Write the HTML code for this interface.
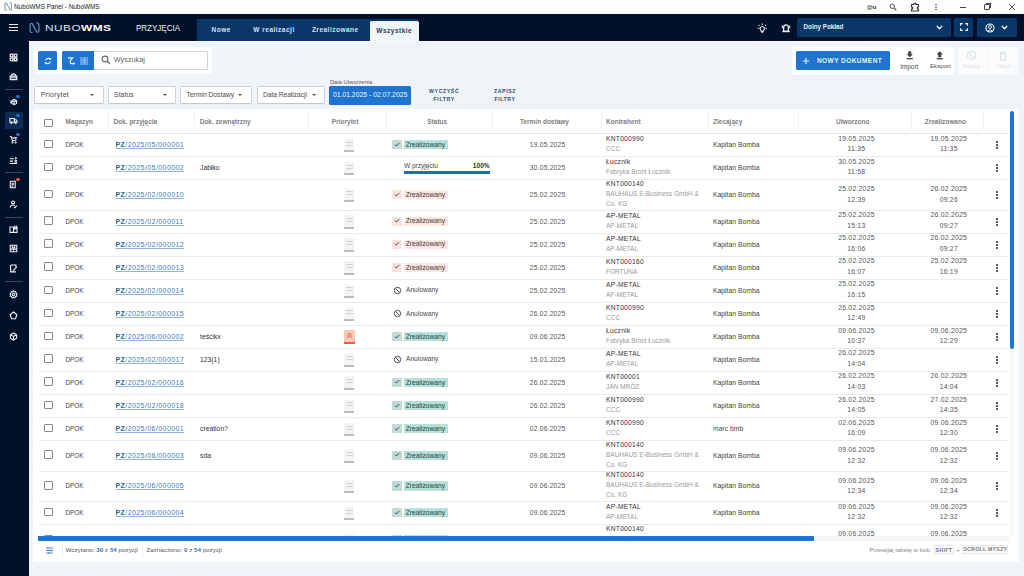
<!DOCTYPE html><html><head><meta charset='utf-8'><style>
*{box-sizing:border-box;margin:0;padding:0}
html,body{width:1024px;height:576px;overflow:hidden;background:#eff4f9;font-family:"Liberation Sans",sans-serif;color:#444}
.a{position:absolute}
.t{position:absolute;white-space:nowrap;line-height:1}
.fc{display:flex;align-items:center}
.cb{position:absolute;width:8.6px;height:8.6px;border:1.25px solid #8a8a8a;border-radius:1px;background:#fff}
.sep{position:absolute;width:1px;background:#efefef}
.rl{position:absolute;height:1px;background:#ebebed}
.cell{position:absolute;display:flex;align-items:center;white-space:nowrap;font-size:6.8px;color:#444}
.kn{position:absolute;display:flex;flex-direction:column;justify-content:center;white-space:nowrap;font-size:6.5px;line-height:10px}
.kn .l1{color:#333;font-size:6.7px;letter-spacing:0.25px}
.kn .l2{color:#9a9a9a}
.dt{position:absolute;display:flex;flex-direction:column;justify-content:center;align-items:center;white-space:nowrap;font-size:6.8px;line-height:10.4px;color:#555;letter-spacing:0.25px}
.pz{color:#3b7cc0;text-decoration:underline;text-decoration-color:#8fb5de;text-decoration-thickness:0.6px;text-underline-offset:1px;letter-spacing:0.42px}
.pz b{color:#2a5f9c}
.hd{position:absolute;top:109.4px;height:24.5px;display:flex;align-items:center;font-size:6.5px;font-weight:700;color:#7f7f7f;white-space:nowrap}
.sb{position:absolute;left:5px;width:18px;height:1px;background:#3a4760}
</style></head><body>
<div class='a' style='left:0;top:0;width:1024px;height:14px;background:#fefefc'></div>
<svg class='a' style='left:3.5px;top:2.3px' width='8.5' height='9' viewBox='0 0 11 11.5'><path d='M3.6 10.7Q1.1 10.9 1.1 8.2V3.4Q1.1 0.6 3.2 1.6L7.8 9.9Q9.9 10.9 9.9 8.1V3.3Q9.9 0.6 7.4 0.8' fill='none' stroke='#8da3bd' stroke-width='1.5'/></svg>
<div class='t' style='left:14px;top:3.5px;font-size:6.4px;color:#222'>NuboWMS Panel - NuboWMS</div>
<div class='t' style='left:867px;top:3.5px;font-size:6px;font-weight:700;color:#333'>&#64;u</div>
<svg class='a' style='left:889px;top:3px' width='8' height='8' viewBox='0 0 8 8'><circle cx='3.3' cy='3.3' r='2.2' fill='none' stroke='#555' stroke-width='1'/><path d='M5 5L7.3 7.3' stroke='#555' stroke-width='1.2'/></svg>
<svg class='a' style='left:910px;top:2px' width='10' height='10' viewBox='0 0 10 10'><path d='M1.5 2.5H4V1.5Q5 0.5 6 1.5V2.5H8.5V5H7.5Q6.5 6 7.5 7H8.5V9H1.5V7H2.5Q3.5 6 2.5 5H1.5Z' fill='none' stroke='#333' stroke-width='1.1'/></svg>
<div class='a' style='left:935px;top:3.5px;width:1.5px;height:1.5px;background:#444;border-radius:50%;box-shadow:0 2.5px 0 #444,0 5px 0 #444'></div>
<div class='a' style='left:959.5px;top:6.5px;width:6.5px;height:1px;background:#444'></div>
<div class='a' style='left:984px;top:4px;width:5.5px;height:5.5px;border:1px solid #444;border-radius:1px'></div>
<div class='a' style='left:985.5px;top:3px;width:5.5px;height:5px;border-top:1px solid #444;border-right:1px solid #444'></div>
<svg class='a' style='left:1008px;top:3px' width='8' height='8' viewBox='0 0 8 8'><path d='M1 1L7 7M7 1L1 7' stroke='#444' stroke-width='0.9'/></svg>
<div class='a' style='left:0;top:14px;width:1024px;height:27px;background:#01112c'></div>
<div class='a' style='left:0;top:41px;width:29px;height:535px;background:#01112c'></div>
<div class='a' style='left:9px;top:23.5px;width:9.3px;height:1.2px;background:#e8ecf2'></div>
<div class='a' style='left:9px;top:26.5px;width:9.3px;height:1.2px;background:#e8ecf2'></div>
<div class='a' style='left:9px;top:29.5px;width:9.3px;height:1.2px;background:#e8ecf2'></div>
<svg class='a' style='left:28.5px;top:21.5px' width='11' height='11.5' viewBox='0 0 11 11.5'><path d='M3.6 10.7Q1.1 10.9 1.1 8.2V3.4Q1.1 0.6 3.2 1.6L7.8 9.9Q9.9 10.9 9.9 8.1V3.3Q9.9 0.6 7.4 0.8' fill='none' stroke='#5a7fab' stroke-width='1.35'/></svg>
<div class='t' style='left:45px;top:24px;font-size:8.4px;color:#dfe5ee;transform-origin:0 0;transform:scaleX(1.42);letter-spacing:0.3px'>NUBO<b style='color:#fff'>WMS</b></div>
<div class='t' style='left:135.6px;top:24px;font-size:8.7px;color:#eef1f5;transform-origin:0 0;transform:scaleX(0.92)'>PRZYJĘCIA</div>
<div class='a' style='left:197px;top:19px;width:221px;height:22px;background:#0a3668'></div>
<div class='a' style='left:370px;top:21px;width:48.5px;height:20px;background:#eff4f9;border-radius:1.5px 1.5px 0 0'></div>
<div class='t' style='left:211.6px;top:26.5px;font-size:6.5px;font-weight:700;letter-spacing:0.5px;color:#d6e2f0'>Nowe</div>
<div class='t' style='left:253.3px;top:26.5px;font-size:6.5px;font-weight:700;letter-spacing:0.5px;color:#d6e2f0'>W realizacji</div>
<div class='t' style='left:311.9px;top:26.5px;font-size:6.5px;font-weight:700;letter-spacing:0.5px;color:#d6e2f0'>Zrealizowane</div>
<div class='t' style='left:376.3px;top:28.3px;font-size:6.5px;font-weight:700;letter-spacing:0.5px;color:#2a3c57'>Wszystkie</div>
<svg class='a' style='left:757px;top:22.5px' width='10.5' height='10.5' viewBox='0 0 10.5 10.5'><path d='M5.25 0.6V2M1.6 2L2.5 2.9M8.9 2L8 2.9M0.6 5.2H1.9M8.6 5.2H9.9' stroke='#e8edf5' stroke-width='1.1'/><path d='M5.25 9.6L3.4 6.6Q2.9 5.6 3.3 4.7Q3.9 3.5 5.25 3.5Q6.6 3.5 7.2 4.7Q7.6 5.6 7.1 6.6Z' fill='none' stroke='#e8edf5' stroke-width='1.15'/></svg>
<svg class='a' style='left:780.5px;top:23px' width='10' height='10' viewBox='0 0 10 10'><path d='M2.6 8.2V4.8Q2.6 1.8 5 1.8Q7.4 1.8 7.4 4.8V8.2Z' fill='none' stroke='#eef2f7' stroke-width='1.3'/><path d='M1.2 8.6H8.8' stroke='#eef2f7' stroke-width='1.2'/><path d='M1.6 2.6Q0.8 3.6 1.4 5M8.4 2.6Q9.2 3.6 8.6 5' fill='none' stroke='#eef2f7' stroke-width='1.1'/></svg>
<div class='a' style='left:797px;top:18px;width:153.5px;height:18.7px;background:#0a3668;border-radius:1.5px'></div>
<div class='t' style='left:803.5px;top:24px;font-size:6.3px;font-weight:700;color:#e6ecf4'>Dolny Pokład</div>
<svg class='a' style='left:935.5px;top:25px' width='7' height='5' viewBox='0 0 7 5'><path d='M0.8 0.9L3.5 3.7L6.2 0.9' fill='none' stroke='#fff' stroke-width='1.3'/></svg>
<div class='a' style='left:954.3px;top:18.2px;width:19.2px;height:18.5px;background:#0a3668;border-radius:1.5px'></div>
<svg class='a' style='left:960px;top:23.3px' width='8' height='8' viewBox='0 0 9 9'><path d='M0.7 3V0.7H3M6 0.7H8.3V3M8.3 6V8.3H6M3 8.3H0.7V6' fill='none' stroke='#fff' stroke-width='1.2'/></svg>
<div class='a' style='left:977.3px;top:18.2px;width:40.2px;height:18.5px;background:#0a3668;border-radius:1.5px'></div>
<svg class='a' style='left:985px;top:22.5px' width='10' height='10' viewBox='0 0 10 10'><circle cx='5' cy='5' r='4' fill='none' stroke='#fff' stroke-width='1.1'/><circle cx='5' cy='4' r='1.5' fill='none' stroke='#fff' stroke-width='0.9'/><path d='M2.6 8Q5 5.8 7.4 8' fill='none' stroke='#fff' stroke-width='0.9'/></svg>
<svg class='a' style='left:1001.3px;top:25px' width='7' height='5' viewBox='0 0 7 5'><path d='M0.8 0.9L3.5 3.7L6.2 0.9' fill='none' stroke='#fff' stroke-width='1.3'/></svg>
<div class='a' style='left:29px;top:41px;width:995px;height:1px;background:#fbfcfe'></div>
<svg class='a' style='left:9px;top:52.5px' width='9' height='9' viewBox='0 0 11 11'><rect x='1.5' y='1.5' width='3.2' height='3.2' stroke='#eef2f7' fill='none' stroke-width='1.43'/><rect x='6.3' y='1.5' width='3.2' height='3.2' stroke='#eef2f7' fill='none' stroke-width='1.43'/><rect x='1.5' y='6.3' width='3.2' height='3.2' stroke='#eef2f7' fill='none' stroke-width='1.43'/><rect x='6.3' y='6.3' width='3.2' height='3.2' stroke='#eef2f7' fill='none' stroke-width='1.82'/></svg>
<svg class='a' style='left:9px;top:72.0px' width='9' height='9' viewBox='0 0 11 11'><path d='M1.5 5H9.5V9.3H1.5Z M3 5V3.5Q5.5 1.2 8 3.5V5 M1.5 7H9.5' stroke='#eef2f7' fill='none' stroke-width='1.43'/></svg>
<div class='sb' style='top:89px'></div>
<svg class='a' style='left:9px;top:97.0px' width='9' height='9' viewBox='0 0 11 11'><path d='M3.5 4.5L6.3 3L9.3 4.5V8L6.3 9.5L3.5 8Z M3.5 4.5L6.3 6L9.3 4.5 M6.3 6V9.5 M0.8 5H2.6M1.2 7H2.8' stroke='#eef2f7' fill='none' stroke-width='1.30'/></svg>
<div class='a' style='left:16.4px;top:94.7px;width:3.6px;height:3.6px;border-radius:50%;background:#2c6cbf'></div>
<div class='a' style='left:5px;top:112.0px;width:17.5px;height:17px;background:#0c2b55;border-radius:1.5px'></div>
<svg class='a' style='left:9px;top:116.0px' width='9' height='9' viewBox='0 0 11 11'><path d='M1.2 3H6.6V7.6H1.2Z M6.6 4.6H8.6L9.8 6V7.6H6.6' stroke='#eef2f7' fill='none' stroke-width='1.37'/><circle cx='3' cy='8.4' r='1' stroke='#eef2f7' fill='none' stroke-width='1.17'/><circle cx='8' cy='8.4' r='1' stroke='#eef2f7' fill='none' stroke-width='1.17'/></svg>
<div class='a' style='left:16.4px;top:113.7px;width:3.6px;height:3.6px;border-radius:50%;background:#2c6cbf'></div>
<svg class='a' style='left:9px;top:135.0px' width='9' height='9' viewBox='0 0 11 11'><path d='M1 1.5L2.6 1.8L4.6 8.3 M3.2 3.6L8.8 3.2L8.3 6.5L4.1 6.8' stroke='#eef2f7' fill='none' stroke-width='1.30'/><circle cx='4.2' cy='9.2' r='0.9' stroke='#eef2f7' fill='none' stroke-width='1.17'/><circle cx='8' cy='9.2' r='0.9' stroke='#eef2f7' fill='none' stroke-width='1.17'/></svg>
<div class='a' style='left:16.4px;top:132.7px;width:3.6px;height:3.6px;border-radius:50%;background:#2c6cbf'></div>
<svg class='a' style='left:9px;top:155.5px' width='9' height='9' viewBox='0 0 11 11'><path d='M1 3.3H6M1 6.3H4.8M1 9.2H9.8M6.8 5L9.8 8M9.8 5L6.8 8M7.8 1.5L9 2.7L7.5 4' stroke='#eef2f7' fill='none' stroke-width='1.30'/></svg>
<div class='sb' style='top:172px'></div>
<svg class='a' style='left:9px;top:180.0px' width='9' height='9' viewBox='0 0 11 11'><path d='M1.6 1.6H7.6V9.4H1.6Z M3 4H6.2M3 5.8H6.2M3 7.6H5' stroke='#eef2f7' fill='none' stroke-width='1.30'/></svg>
<div class='a' style='left:16.4px;top:177.7px;width:3.6px;height:3.6px;border-radius:50%;background:#de5a42'></div>
<svg class='a' style='left:9px;top:199.5px' width='9' height='9' viewBox='0 0 11 11'><path d='M3.2 3Q3.2 1.2 5 1.2Q6.8 1.2 6.8 3Q6.8 4.6 5 4.6Q3.2 4.6 3.2 3Z M1.5 9.2Q1.5 6 5 6Q6.5 6 7.5 6.6 M6 8.3L7.3 9.4L9.6 7' stroke='#eef2f7' fill='none' stroke-width='1.30'/></svg>
<div class='sb' style='top:216.5px'></div>
<svg class='a' style='left:9px;top:225.0px' width='9' height='9' viewBox='0 0 11 11'><path d='M1.2 2.5H4.8L5.5 3.5L6.2 2.5H9.8V9H1.2Z M5.5 3.5V9 M6.8 1V5L8 4.2L9.2 5V1' stroke='#eef2f7' fill='none' stroke-width='1.30'/></svg>
<svg class='a' style='left:9px;top:244.0px' width='9' height='9' viewBox='0 0 11 11'><path d='M1.5 1.5H9.5V9.5H1.5Z M1.5 6.3H9.5M5.5 6.3V9.5M4 1.5V4.5H7V1.5' stroke='#eef2f7' fill='none' stroke-width='1.30'/></svg>
<svg class='a' style='left:9px;top:263.5px' width='9' height='9' viewBox='0 0 11 11'><path d='M2 1.3H8.5V5 M8.5 9.6H2V1.3 M4.8 8.3L9.6 3.5' stroke='#eef2f7' fill='none' stroke-width='1.37'/></svg>
<div class='sb' style='top:280.5px'></div>
<svg class='a' style='left:9px;top:290.0px' width='9' height='9' viewBox='0 0 11 11'><circle cx='5.5' cy='5.5' r='1.5' stroke='#eef2f7' fill='none' stroke-width='1.30'/><path d='M5.5 1L6.6 2.2L8.2 2L8.4 3.6L9.8 4.6L9 6L9.6 7.6L8 8L7.2 9.6L5.5 9L3.8 9.6L3 8L1.4 7.6L2 6L1.2 4.6L2.6 3.6L2.8 2L4.4 2.2Z' stroke='#eef2f7' fill='none' stroke-width='1.23'/></svg>
<svg class='a' style='left:9px;top:310.5px' width='9' height='9' viewBox='0 0 11 11'><path d='M5.5 1.3L9.6 4.5L8 9.5H3L1.4 4.5Z' stroke='#eef2f7' fill='none' stroke-width='1.43'/></svg>
<svg class='a' style='left:9px;top:331.5px' width='9' height='9' viewBox='0 0 11 11'><path d='M5.5 1.2L9.3 3.3V7.7L5.5 9.8L1.7 7.7V3.3Z M1.7 3.3L5.5 5.5L9.3 3.3 M5.5 5.5V9.8' stroke='#eef2f7' fill='none' stroke-width='1.30'/></svg>
<div class='a' style='left:33.5px;top:47px;width:178px;height:27px;background:#fdfeff;border-radius:2px'></div>
<div class='a' style='left:38.3px;top:51px;width:19.2px;height:19px;background:#1f73d1;border-radius:1.5px'></div>
<svg class='a' style='left:44px;top:56.5px' width='8' height='8' viewBox='0 0 8 8'><path d='M6.6 2.6A3 3 0 0 0 1.4 3.2M1.4 5.4A3 3 0 0 0 6.6 4.8' fill='none' stroke='#e6f1fc' stroke-width='1.15'/><path d='M5.2 0.6L7.4 1.2L6.6 3.4Z M2.8 7.4L0.6 6.8L1.4 4.6Z' fill='#e6f1fc'/></svg>
<div class='a' style='left:61.5px;top:51px;width:32.5px;height:19px;background:#1f73d1;border-radius:1.5px 0 0 1.5px'></div>
<svg class='a' style='left:67px;top:56.5px' width='9' height='8' viewBox='0 0 9 8'><path d='M0.8 0.8H5.6L3.4 3.4V6.2 M3.4 6.2Q4.5 7 7.2 6.6' fill='none' stroke='#eef6fe' stroke-width='1.2'/><path d='M6.4 5.3L7.8 6.6L6.3 7.6' fill='none' stroke='#eef6fe' stroke-width='0.9'/></svg>
<div class='a' style='left:79.8px;top:56.9px;width:8.4px;height:7.8px;background:#62a2ea;border-radius:0.5px'></div>
<div class='a' style='left:83.6px;top:58.6px;width:0.8px;height:4.4px;background:#a9cdf3'></div>
<div class='a' style='left:94px;top:51px;width:114px;height:19px;background:#fff;border:1px solid #d2d6db;border-left:none;border-radius:0 1.5px 1.5px 0'></div>
<svg class='a' style='left:100.8px;top:55.1px' width='10' height='10' viewBox='0 0 10 10'><circle cx='4' cy='4' r='2.9' fill='none' stroke='#666' stroke-width='1.1'/><path d='M6.2 6.2L9 9' stroke='#666' stroke-width='1.3'/></svg>
<div class='t' style='left:113.8px;top:55.9px;font-size:7.3px;color:#5f5f5f'>Wyszukaj</div>
<div class='a' style='left:791.5px;top:47px;width:162.5px;height:27.5px;background:#feffff;border-radius:2px'></div>
<div class='a' style='left:957.5px;top:47px;width:60px;height:27.5px;background:#fafcfe;border-radius:2px'></div>
<div class='a' style='left:795.5px;top:51.4px;width:94.5px;height:19px;background:#1f73d1;border-radius:1.5px'></div>
<svg class='a' style='left:802px;top:57px' width='8' height='8' viewBox='0 0 8 8'><path d='M4 0.8V7.2M0.8 4H7.2' stroke='#e6f0fb' stroke-width='1.2'/></svg>
<div class='t' style='left:816.9px;top:57.5px;font-size:6.5px;font-weight:700;letter-spacing:0.45px;color:#e8f1fb'>NOWY DOKUMENT</div>
<svg class='a' style='left:906.3px;top:51px' width='7.5' height='8.5' viewBox='0 0 7.5 8.5'><path d='M2.6 0.6V3.4H1.2L3.75 6L6.3 3.4H4.9V0.6Z' fill='#444' stroke='#333' stroke-width='0.6'/><path d='M0.6 7.7H6.9' stroke='#333' stroke-width='1.2'/></svg>
<div class='t' style='left:900.2px;top:63.6px;font-size:6.4px;color:#505050'>Import</div>
<svg class='a' style='left:936.3px;top:51px' width='7.5' height='8.5' viewBox='0 0 7.5 8.5'><path d='M2.6 6V3.2H1.2L3.75 0.6L6.3 3.2H4.9V6Z' fill='#444' stroke='#333' stroke-width='0.6'/><path d='M0.6 7.7H6.9' stroke='#333' stroke-width='1.2'/></svg>
<div class='t' style='left:930px;top:63.3px;font-size:6.15px;color:#505050'>Eksport</div>
<svg class='a' style='left:965.5px;top:50px' width='11' height='11' viewBox='0 0 11 11'><circle cx='5.5' cy='5.5' r='4.2' fill='none' stroke='#dcdfe3' stroke-width='1.1'/><path d='M2.6 2.6L8.4 8.4' stroke='#dcdfe3' stroke-width='1.1'/></svg>
<div class='t' style='left:962.6px;top:63.3px;font-size:6.1px;color:#dcdfe2'>Anuluj</div>
<div class='a' style='left:987.3px;top:51px;width:0.8px;height:19px;background:#f0f2f4'></div>
<svg class='a' style='left:999.3px;top:50.5px' width='8' height='10' viewBox='0 0 8 10'><path d='M1.5 1.2H6.5V9.2H1.5Z M1.5 3H6.5' fill='none' stroke='#dcdfe3' stroke-width='1'/></svg>
<div class='t' style='left:996.7px;top:63.3px;font-size:6.1px;color:#dcdfe2'>Usuń</div>
<div class='a' style='left:34.4px;top:86.2px;width:69.2px;height:18.2px;background:#fff;border:1px solid #cfd3d8;border-bottom-color:#c4c8cd;border-radius:1.5px'></div>
<div class='t' style='left:40.699999999999996px;top:90.8px;font-size:7.0px;letter-spacing:0.25px;color:#4a4a4a'>Priorytet</div>
<div class='a' style='left:90.0px;top:94px;width:0;height:0;border-left:2.1px solid transparent;border-right:2.1px solid transparent;border-top:2.1px solid #555'></div>
<div class='a' style='left:107.7px;top:86.2px;width:68.7px;height:18.2px;background:#fff;border:1px solid #cfd3d8;border-bottom-color:#c4c8cd;border-radius:1.5px'></div>
<div class='t' style='left:114.0px;top:91.5px;font-size:6.8px;letter-spacing:0.1px;color:#4a4a4a'>Status</div>
<div class='a' style='left:162.8px;top:94px;width:0;height:0;border-left:2.1px solid transparent;border-right:2.1px solid transparent;border-top:2.1px solid #555'></div>
<div class='a' style='left:180.3px;top:86.2px;width:71.7px;height:18.2px;background:#fff;border:1px solid #cfd3d8;border-bottom-color:#c4c8cd;border-radius:1.5px'></div>
<div class='t' style='left:186.60000000000002px;top:91.5px;font-size:6.7px;letter-spacing:0px;color:#4a4a4a'>Termin Dostawy</div>
<div class='a' style='left:238.4px;top:94px;width:0;height:0;border-left:2.1px solid transparent;border-right:2.1px solid transparent;border-top:2.1px solid #555'></div>
<div class='a' style='left:256.7px;top:86.2px;width:68.6px;height:18.2px;background:#fff;border:1px solid #cfd3d8;border-bottom-color:#c4c8cd;border-radius:1.5px'></div>
<div class='t' style='left:263.0px;top:91.5px;font-size:6.6px;letter-spacing:0px;color:#4a4a4a'>Data Realizacji</div>
<div class='a' style='left:311.69999999999993px;top:94px;width:0;height:0;border-left:2.1px solid transparent;border-right:2.1px solid transparent;border-top:2.1px solid #555'></div>
<div class='t' style='left:330px;top:80.3px;font-size:5.7px;color:#555'>Data Utworzenia</div>
<div class='a' style='left:329px;top:86.3px;width:82.1px;height:18.4px;background:#1f73d1;border-radius:1.5px'></div>
<div class='t' style='left:332.9px;top:92px;font-size:6.83px;color:#eef5fd'>01.01.2025 - 02.07.2025</div>
<div class='t' style='left:428.7px;top:88px;font-size:5.2px;font-weight:700;letter-spacing:0.6px;color:#2a4a72;text-align:center;width:31px;line-height:7.7px;white-space:normal'>WYCZYŚĆ FILTRY</div>
<div class='t' style='left:490px;top:88px;font-size:5.2px;font-weight:700;letter-spacing:0.6px;color:#2a4a72;text-align:center;width:30px;line-height:7.7px;white-space:normal'>ZAPISZ FILTRY</div>
<div class='a' style='left:33px;top:108.5px;width:985.5px;height:453px;background:#fff;border-radius:2px'></div>
<div class='sep' style='left:107.6px;top:112px;height:18px'></div>
<div class='sep' style='left:193.7px;top:112px;height:18px'></div>
<div class='sep' style='left:308.2px;top:112px;height:18px'></div>
<div class='sep' style='left:386.3px;top:112px;height:18px'></div>
<div class='sep' style='left:492.2px;top:112px;height:18px'></div>
<div class='sep' style='left:600.7px;top:112px;height:18px'></div>
<div class='sep' style='left:707.8px;top:112px;height:18px'></div>
<div class='sep' style='left:798.3px;top:112px;height:18px'></div>
<div class='sep' style='left:911.2px;top:112px;height:18px'></div>
<div class='sep' style='left:983.4px;top:112px;height:18px'></div>
<div class='rl' style='left:38.5px;top:133px;width:969.5px;background:#e3e5e8'></div>
<div class='cb' style='left:44px;top:118.7px'></div>
<div class='hd' style='left:65.5px'>Magazyn</div>
<div class='hd' style='left:113.5px'>Dok. przyjęcia</div>
<div class='hd' style='left:199.7px'>Dok. zewnętrzny</div>
<div class='hd' style='left:308.2px;width:78.10000000000002px;justify-content:center;padding-right:4px'>Priorytet</div>
<div class='hd' style='left:386.3px;width:105.89999999999998px;justify-content:center;padding-right:4px'>Status</div>
<div class='hd' style='left:492.2px;width:108.50000000000006px;justify-content:center;padding-right:4px'>Termin dostawy</div>
<div class='hd' style='left:606px'>Kontrahent</div>
<div class='hd' style='left:713px'>Zlecający</div>
<div class='hd' style='left:798.3px;width:112.90000000000009px;justify-content:center;padding-right:4px'>Utworzono</div>
<div class='hd' style='left:911.2px;width:72.19999999999993px;justify-content:center;padding-right:4px'>Zrealizowano</div>
<div class='a' style='left:33px;top:134px;width:987px;height:402px;overflow:hidden'>
<div class='rl' style='left:5.5px;top:22px;width:969.5px'></div>
<div class='cb' style='left:11px;top:5.7px'></div>
<div class='cell' style='left:32.5px;top:-0.8px;height:22.7px;font-size:6.3px;color:#444'>DPOK</div>
<div class='cell' style='left:82.5px;top:-0.8px;height:22.7px;font-size:7px'><span class='pz'><b>PZ</b>/2025/05/000001</span></div>
<div class='a' style='left:310.8px;top:4.7px;width:10.5px;height:13.3px;background:#f4f4f4'></div>
<div class='a' style='left:312.6px;top:7.5px;width:7px;height:0.8px;background:#d3d3d3'></div>
<div class='a' style='left:312.6px;top:10.5px;width:7px;height:0.8px;background:#d3d3d3'></div>
<div class='a' style='left:310.8px;top:16.1px;width:10.5px;height:1.9px;background:#bcbcbc'></div>
<div class='a' style='left:359px;top:6.2px;width:9.5px;height:9.2px;background:#c2dbd6'></div>
<svg class='a' style='left:361px;top:7.7px' width='6' height='5' viewBox='0 0 6 5'><path d='M0.8 2.6L2.3 4L5.3 1' fill='none' stroke='#2a5852' stroke-width='1'/></svg>
<div class='a' style='left:370.9px;top:6.2px;width:43.8px;height:9.2px;background:#b6e1d9'></div>
<div class='cell' style='left:372.7px;top:5.7px;height:9.2px;font-size:6.7px;color:#27403d'>Zrealizowany</div>
<div class='cell' style='left:460.2px;top:-0.8px;height:22.7px;width:108.8px;justify-content:center;font-size:6.7px;letter-spacing:0.2px;color:#555'>19.05.2025</div>
<div class='kn' style='left:573px;top:-1.3px;height:22.7px'><div class='l1'>KNT000990</div><div class='l2'>CCC</div></div>
<div class='cell' style='left:680px;top:-0.8px;height:22.7px;font-size:6.8px;color:#444'>Kapitan Bomba</div>
<div class='dt' style='left:767.3px;top:-1.3px;height:22.7px;width:112.3px'><div>19.05.2025</div><div>11:35</div></div>
<div class='dt' style='left:879.9px;top:-1.3px;height:22.7px;width:71.8px'><div>19.05.2025</div><div>11:35</div></div>
<div class='a' style='left:963.3px;top:7px;width:1.8px;height:1.8px;background:#2a2a2a;border-radius:50%;box-shadow:0 3px 0 #2a2a2a,0 6px 0 #2a2a2a'></div>
<div class='rl' style='left:5.5px;top:45px;width:969.5px'></div>
<div class='cb' style='left:11px;top:28.7px'></div>
<div class='cell' style='left:32.5px;top:22.2px;height:22.7px;font-size:6.3px;color:#444'>DPOK</div>
<div class='cell' style='left:82.5px;top:22.2px;height:22.7px;font-size:7px'><span class='pz'><b>PZ</b>/2025/05/000002</span></div>
<div class='cell' style='left:167px;top:22.2px;height:22.7px;font-size:6.8px;color:#333'>Jabłko</div>
<div class='a' style='left:310.8px;top:27.7px;width:10.5px;height:13.3px;background:#f4f4f4'></div>
<div class='a' style='left:312.6px;top:30.5px;width:7px;height:0.8px;background:#d3d3d3'></div>
<div class='a' style='left:312.6px;top:33.5px;width:7px;height:0.8px;background:#d3d3d3'></div>
<div class='a' style='left:310.8px;top:39.1px;width:10.5px;height:1.9px;background:#bcbcbc'></div>
<div class='t' style='left:370.9px;top:29.0px;font-size:6.58px;color:#444'>W przyjęciu</div>
<div class='t' style='left:439.8px;top:29.0px;font-size:6.6px;font-weight:700;color:#333'>100%</div>
<div class='a' style='left:370.9px;top:37.3px;width:85.8px;height:3.2px;background:#1f6bc2;border-radius:0.5px'></div>
<div class='cell' style='left:460.2px;top:22.2px;height:22.7px;width:108.8px;justify-content:center;font-size:6.7px;letter-spacing:0.2px;color:#555'>30.05.2025</div>
<div class='kn' style='left:573px;top:21.7px;height:22.7px'><div class='l1'>Łucznik</div><div class='l2'>Fabryka Broni Łucznik</div></div>
<div class='cell' style='left:680px;top:22.2px;height:22.7px;font-size:6.8px;color:#444'>Kapitan Bomba</div>
<div class='dt' style='left:767.3px;top:21.7px;height:22.7px;width:112.3px'><div>30.05.2025</div><div>11:58</div></div>
<div class='a' style='left:963.3px;top:30px;width:1.8px;height:1.8px;background:#2a2a2a;border-radius:50%;box-shadow:0 3px 0 #2a2a2a,0 6px 0 #2a2a2a'></div>
<div class='rl' style='left:5.5px;top:76px;width:969.5px'></div>
<div class='cb' style='left:11px;top:55.55px'></div>
<div class='cell' style='left:32.5px;top:45.2px;height:30.4px;font-size:6.3px;color:#444'>DPOK</div>
<div class='cell' style='left:82.5px;top:45.2px;height:30.4px;font-size:7px'><span class='pz'><b>PZ</b>/2025/02/000010</span></div>
<div class='a' style='left:310.8px;top:54.55px;width:10.5px;height:13.3px;background:#f4f4f4'></div>
<div class='a' style='left:312.6px;top:57.35px;width:7px;height:0.8px;background:#d3d3d3'></div>
<div class='a' style='left:312.6px;top:60.35px;width:7px;height:0.8px;background:#d3d3d3'></div>
<div class='a' style='left:310.8px;top:65.95px;width:10.5px;height:1.9px;background:#bcbcbc'></div>
<div class='a' style='left:359px;top:56.05px;width:9.5px;height:9.2px;background:#f9e4e0'></div>
<svg class='a' style='left:361px;top:57.55px' width='6' height='5' viewBox='0 0 6 5'><path d='M0.8 2.6L2.3 4L5.3 1' fill='none' stroke='#6a4a47' stroke-width='1'/></svg>
<div class='a' style='left:370.9px;top:56.05px;width:43.8px;height:9.2px;background:#fce7e3'></div>
<div class='cell' style='left:372.7px;top:55.55px;height:9.2px;font-size:6.7px;color:#4a3634'>Zrealizowany</div>
<div class='cell' style='left:460.2px;top:45.2px;height:30.4px;width:108.8px;justify-content:center;font-size:6.7px;letter-spacing:0.2px;color:#555'>25.02.2025</div>
<div class='kn' style='left:573px;top:44.7px;height:30.4px'><div class='l1'>KNT000140</div><div class='l2'>BAUHAUS E-Business GmbH &</div><div class='l2'>Co. KG</div></div>
<div class='cell' style='left:680px;top:45.2px;height:30.4px;font-size:6.8px;color:#444'>Kapitan Bomba</div>
<div class='dt' style='left:767.3px;top:45.5px;height:30.4px;width:112.3px'><div>25.02.2025</div><div>12:39</div></div>
<div class='dt' style='left:879.9px;top:45.5px;height:30.4px;width:71.8px'><div>26.02.2025</div><div>09:26</div></div>
<div class='a' style='left:963.3px;top:57px;width:1.8px;height:1.8px;background:#2a2a2a;border-radius:50%;box-shadow:0 3px 0 #2a2a2a,0 6px 0 #2a2a2a'></div>
<div class='rl' style='left:5.5px;top:99px;width:969.5px'></div>
<div class='cb' style='left:11px;top:82.35px'></div>
<div class='cell' style='left:32.5px;top:75.9px;height:22.6px;font-size:6.3px;color:#444'>DPOK</div>
<div class='cell' style='left:82.5px;top:75.9px;height:22.6px;font-size:7px'><span class='pz'><b>PZ</b>/2025/02/000011</span></div>
<div class='a' style='left:310.8px;top:81.35px;width:10.5px;height:13.3px;background:#f4f4f4'></div>
<div class='a' style='left:312.6px;top:84.15px;width:7px;height:0.8px;background:#d3d3d3'></div>
<div class='a' style='left:312.6px;top:87.15px;width:7px;height:0.8px;background:#d3d3d3'></div>
<div class='a' style='left:310.8px;top:92.75px;width:10.5px;height:1.9px;background:#bcbcbc'></div>
<div class='a' style='left:359px;top:82.85px;width:9.5px;height:9.2px;background:#f9e4e0'></div>
<svg class='a' style='left:361px;top:84.35px' width='6' height='5' viewBox='0 0 6 5'><path d='M0.8 2.6L2.3 4L5.3 1' fill='none' stroke='#6a4a47' stroke-width='1'/></svg>
<div class='a' style='left:370.9px;top:82.85px;width:43.8px;height:9.2px;background:#fce7e3'></div>
<div class='cell' style='left:372.7px;top:82.35px;height:9.2px;font-size:6.7px;color:#4a3634'>Zrealizowany</div>
<div class='cell' style='left:460.2px;top:75.9px;height:22.6px;width:108.8px;justify-content:center;font-size:6.7px;letter-spacing:0.2px;color:#555'>25.02.2025</div>
<div class='kn' style='left:573px;top:75.4px;height:22.6px'><div class='l1'>AP-METAL</div><div class='l2'>AP-METAL</div></div>
<div class='cell' style='left:680px;top:75.9px;height:22.6px;font-size:6.8px;color:#444'>Kapitan Bomba</div>
<div class='dt' style='left:767.3px;top:75.4px;height:22.6px;width:112.3px'><div>25.02.2025</div><div>15:13</div></div>
<div class='dt' style='left:879.9px;top:75.4px;height:22.6px;width:71.8px'><div>26.02.2025</div><div>09:27</div></div>
<div class='a' style='left:963.3px;top:84px;width:1.8px;height:1.8px;background:#2a2a2a;border-radius:50%;box-shadow:0 3px 0 #2a2a2a,0 6px 0 #2a2a2a'></div>
<div class='rl' style='left:5.5px;top:122px;width:969.5px'></div>
<div class='cb' style='left:11px;top:105.35px'></div>
<div class='cell' style='left:32.5px;top:98.8px;height:22.8px;font-size:6.3px;color:#444'>DPOK</div>
<div class='cell' style='left:82.5px;top:98.8px;height:22.8px;font-size:7px'><span class='pz'><b>PZ</b>/2025/02/000012</span></div>
<div class='a' style='left:310.8px;top:104.35px;width:10.5px;height:13.3px;background:#f4f4f4'></div>
<div class='a' style='left:312.6px;top:107.15px;width:7px;height:0.8px;background:#d3d3d3'></div>
<div class='a' style='left:312.6px;top:110.15px;width:7px;height:0.8px;background:#d3d3d3'></div>
<div class='a' style='left:310.8px;top:115.75px;width:10.5px;height:1.9px;background:#bcbcbc'></div>
<div class='a' style='left:359px;top:105.85px;width:9.5px;height:9.2px;background:#f9e4e0'></div>
<svg class='a' style='left:361px;top:107.35px' width='6' height='5' viewBox='0 0 6 5'><path d='M0.8 2.6L2.3 4L5.3 1' fill='none' stroke='#6a4a47' stroke-width='1'/></svg>
<div class='a' style='left:370.9px;top:105.85px;width:43.8px;height:9.2px;background:#fce7e3'></div>
<div class='cell' style='left:372.7px;top:105.35px;height:9.2px;font-size:6.7px;color:#4a3634'>Zrealizowany</div>
<div class='cell' style='left:460.2px;top:98.8px;height:22.8px;width:108.8px;justify-content:center;font-size:6.7px;letter-spacing:0.2px;color:#555'>25.02.2025</div>
<div class='kn' style='left:573px;top:98.3px;height:22.8px'><div class='l1'>AP-METAL</div><div class='l2'>AP-METAL</div></div>
<div class='cell' style='left:680px;top:98.8px;height:22.8px;font-size:6.8px;color:#444'>Kapitan Bomba</div>
<div class='dt' style='left:767.3px;top:98.3px;height:22.8px;width:112.3px'><div>25.02.2025</div><div>16:06</div></div>
<div class='dt' style='left:879.9px;top:98.3px;height:22.8px;width:71.8px'><div>26.02.2025</div><div>09:27</div></div>
<div class='a' style='left:963.3px;top:107px;width:1.8px;height:1.8px;background:#2a2a2a;border-radius:50%;box-shadow:0 3px 0 #2a2a2a,0 6px 0 #2a2a2a'></div>
<div class='rl' style='left:5.5px;top:145px;width:969.5px'></div>
<div class='cb' style='left:11px;top:128.45px'></div>
<div class='cell' style='left:32.5px;top:121.9px;height:22.8px;font-size:6.3px;color:#444'>DPOK</div>
<div class='cell' style='left:82.5px;top:121.9px;height:22.8px;font-size:7px'><span class='pz'><b>PZ</b>/2025/02/000013</span></div>
<div class='a' style='left:310.8px;top:127.45px;width:10.5px;height:13.3px;background:#f4f4f4'></div>
<div class='a' style='left:312.6px;top:130.25px;width:7px;height:0.8px;background:#d3d3d3'></div>
<div class='a' style='left:312.6px;top:133.25px;width:7px;height:0.8px;background:#d3d3d3'></div>
<div class='a' style='left:310.8px;top:138.85px;width:10.5px;height:1.9px;background:#bcbcbc'></div>
<div class='a' style='left:359px;top:128.95px;width:9.5px;height:9.2px;background:#f9e4e0'></div>
<svg class='a' style='left:361px;top:130.45px' width='6' height='5' viewBox='0 0 6 5'><path d='M0.8 2.6L2.3 4L5.3 1' fill='none' stroke='#6a4a47' stroke-width='1'/></svg>
<div class='a' style='left:370.9px;top:128.95px;width:43.8px;height:9.2px;background:#fce7e3'></div>
<div class='cell' style='left:372.7px;top:128.45px;height:9.2px;font-size:6.7px;color:#4a3634'>Zrealizowany</div>
<div class='cell' style='left:460.2px;top:121.9px;height:22.8px;width:108.8px;justify-content:center;font-size:6.7px;letter-spacing:0.2px;color:#555'>25.02.2025</div>
<div class='kn' style='left:573px;top:121.4px;height:22.8px'><div class='l1'>KNT000160</div><div class='l2'>FORTUNA</div></div>
<div class='cell' style='left:680px;top:121.9px;height:22.8px;font-size:6.8px;color:#444'>Kapitan Bomba</div>
<div class='dt' style='left:767.3px;top:121.4px;height:22.8px;width:112.3px'><div>25.02.2025</div><div>16:07</div></div>
<div class='dt' style='left:879.9px;top:121.4px;height:22.8px;width:71.8px'><div>25.02.2025</div><div>16:19</div></div>
<div class='a' style='left:963.3px;top:130px;width:1.8px;height:1.8px;background:#2a2a2a;border-radius:50%;box-shadow:0 3px 0 #2a2a2a,0 6px 0 #2a2a2a'></div>
<div class='rl' style='left:5.5px;top:168px;width:969.5px'></div>
<div class='cb' style='left:11px;top:151.55px'></div>
<div class='cell' style='left:32.5px;top:145.0px;height:22.8px;font-size:6.3px;color:#444'>DPOK</div>
<div class='cell' style='left:82.5px;top:145.0px;height:22.8px;font-size:7px'><span class='pz'><b>PZ</b>/2025/02/000014</span></div>
<div class='a' style='left:310.8px;top:150.55px;width:10.5px;height:13.3px;background:#f4f4f4'></div>
<div class='a' style='left:312.6px;top:153.35px;width:7px;height:0.8px;background:#d3d3d3'></div>
<div class='a' style='left:312.6px;top:156.35px;width:7px;height:0.8px;background:#d3d3d3'></div>
<div class='a' style='left:310.8px;top:161.95px;width:10.5px;height:1.9px;background:#bcbcbc'></div>
<svg class='a' style='left:359.8px;top:151.75px' width='9' height='9' viewBox='0 0 9 9'><circle cx='4.5' cy='4.5' r='3.2' fill='none' stroke='#505050' stroke-width='1'/><path d='M2.3 2.3L6.7 6.7' stroke='#505050' stroke-width='1'/></svg>
<div class='cell' style='left:373px;top:151.35px;height:9.2px;font-size:6.64px;color:#4a4a4a'>Anulowany</div>
<div class='cell' style='left:460.2px;top:145.0px;height:22.8px;width:108.8px;justify-content:center;font-size:6.7px;letter-spacing:0.2px;color:#555'>25.02.2025</div>
<div class='kn' style='left:573px;top:144.5px;height:22.8px'><div class='l1'>AP-METAL</div><div class='l2'>AP-METAL</div></div>
<div class='cell' style='left:680px;top:145.0px;height:22.8px;font-size:6.8px;color:#444'>Kapitan Bomba</div>
<div class='dt' style='left:767.3px;top:144.5px;height:22.8px;width:112.3px'><div>25.02.2025</div><div>16:15</div></div>
<div class='a' style='left:963.3px;top:153px;width:1.8px;height:1.8px;background:#2a2a2a;border-radius:50%;box-shadow:0 3px 0 #2a2a2a,0 6px 0 #2a2a2a'></div>
<div class='rl' style='left:5.5px;top:191px;width:969.5px'></div>
<div class='cb' style='left:11px;top:174.65px'></div>
<div class='cell' style='left:32.5px;top:168.1px;height:22.8px;font-size:6.3px;color:#444'>DPOK</div>
<div class='cell' style='left:82.5px;top:168.1px;height:22.8px;font-size:7px'><span class='pz'><b>PZ</b>/2025/02/000015</span></div>
<div class='a' style='left:310.8px;top:173.65px;width:10.5px;height:13.3px;background:#f4f4f4'></div>
<div class='a' style='left:312.6px;top:176.45px;width:7px;height:0.8px;background:#d3d3d3'></div>
<div class='a' style='left:312.6px;top:179.45px;width:7px;height:0.8px;background:#d3d3d3'></div>
<div class='a' style='left:310.8px;top:185.05px;width:10.5px;height:1.9px;background:#bcbcbc'></div>
<svg class='a' style='left:359.8px;top:174.85px' width='9' height='9' viewBox='0 0 9 9'><circle cx='4.5' cy='4.5' r='3.2' fill='none' stroke='#505050' stroke-width='1'/><path d='M2.3 2.3L6.7 6.7' stroke='#505050' stroke-width='1'/></svg>
<div class='cell' style='left:373px;top:174.45px;height:9.2px;font-size:6.64px;color:#4a4a4a'>Anulowany</div>
<div class='cell' style='left:460.2px;top:168.1px;height:22.8px;width:108.8px;justify-content:center;font-size:6.7px;letter-spacing:0.2px;color:#555'>26.02.2025</div>
<div class='kn' style='left:573px;top:167.6px;height:22.8px'><div class='l1'>KNT000990</div><div class='l2'>CCC</div></div>
<div class='cell' style='left:680px;top:168.1px;height:22.8px;font-size:6.8px;color:#444'>Kapitan Bomba</div>
<div class='dt' style='left:767.3px;top:167.6px;height:22.8px;width:112.3px'><div>26.02.2025</div><div>12:49</div></div>
<div class='a' style='left:963.3px;top:176px;width:1.8px;height:1.8px;background:#2a2a2a;border-radius:50%;box-shadow:0 3px 0 #2a2a2a,0 6px 0 #2a2a2a'></div>
<div class='rl' style='left:5.5px;top:214px;width:969.5px'></div>
<div class='cb' style='left:11px;top:197.6px'></div>
<div class='cell' style='left:32.5px;top:191.2px;height:22.5px;font-size:6.3px;color:#444'>DPOK</div>
<div class='cell' style='left:82.5px;top:191.2px;height:22.5px;font-size:7px'><span class='pz'><b>PZ</b>/2025/06/000002</span></div>
<div class='cell' style='left:167px;top:191.2px;height:22.5px;font-size:6.8px;color:#333'>teścikx</div>
<div class='a' style='left:310.8px;top:196.3px;width:11px;height:13.6px;background:#f9c8b8'></div>
<svg class='a' style='left:312.8px;top:198.0px' width='7' height='7' viewBox='0 0 7 7'><path d='M1.2 3.4L3.5 1.2L5.8 3.4M1.2 5.9L3.5 3.7L5.8 5.9' fill='none' stroke='#e8735c' stroke-width='1.05'/></svg>
<div class='a' style='left:310.8px;top:208.0px;width:11px;height:1.9px;background:#e35b43'></div>
<div class='a' style='left:359px;top:198.1px;width:9.5px;height:9.2px;background:#c2dbd6'></div>
<svg class='a' style='left:361px;top:199.6px' width='6' height='5' viewBox='0 0 6 5'><path d='M0.8 2.6L2.3 4L5.3 1' fill='none' stroke='#2a5852' stroke-width='1'/></svg>
<div class='a' style='left:370.9px;top:198.1px;width:43.8px;height:9.2px;background:#b6e1d9'></div>
<div class='cell' style='left:372.7px;top:197.6px;height:9.2px;font-size:6.7px;color:#27403d'>Zrealizowany</div>
<div class='cell' style='left:460.2px;top:191.2px;height:22.5px;width:108.8px;justify-content:center;font-size:6.7px;letter-spacing:0.2px;color:#555'>09.06.2025</div>
<div class='kn' style='left:573px;top:190.7px;height:22.5px'><div class='l1'>Łucznik</div><div class='l2'>Fabryka Broni Łucznik</div></div>
<div class='cell' style='left:680px;top:191.2px;height:22.5px;font-size:6.8px;color:#444'>Kapitan Bomba</div>
<div class='dt' style='left:767.3px;top:190.7px;height:22.5px;width:112.3px'><div>09.06.2025</div><div>10:37</div></div>
<div class='dt' style='left:879.9px;top:190.7px;height:22.5px;width:71.8px'><div>09.06.2025</div><div>12:29</div></div>
<div class='a' style='left:963.3px;top:199px;width:1.8px;height:1.8px;background:#2a2a2a;border-radius:50%;box-shadow:0 3px 0 #2a2a2a,0 6px 0 #2a2a2a'></div>
<div class='rl' style='left:5.5px;top:237px;width:969.5px'></div>
<div class='cb' style='left:11px;top:220.45px'></div>
<div class='cell' style='left:32.5px;top:214.0px;height:22.6px;font-size:6.3px;color:#444'>DPOK</div>
<div class='cell' style='left:82.5px;top:214.0px;height:22.6px;font-size:7px'><span class='pz'><b>PZ</b>/2025/02/000017</span></div>
<div class='cell' style='left:167px;top:214.0px;height:22.6px;font-size:6.8px;color:#333'>123(1)</div>
<div class='a' style='left:310.8px;top:219.45px;width:10.5px;height:13.3px;background:#f4f4f4'></div>
<div class='a' style='left:312.6px;top:222.25px;width:7px;height:0.8px;background:#d3d3d3'></div>
<div class='a' style='left:312.6px;top:225.25px;width:7px;height:0.8px;background:#d3d3d3'></div>
<div class='a' style='left:310.8px;top:230.85px;width:10.5px;height:1.9px;background:#bcbcbc'></div>
<svg class='a' style='left:359.8px;top:220.65px' width='9' height='9' viewBox='0 0 9 9'><circle cx='4.5' cy='4.5' r='3.2' fill='none' stroke='#505050' stroke-width='1'/><path d='M2.3 2.3L6.7 6.7' stroke='#505050' stroke-width='1'/></svg>
<div class='cell' style='left:373px;top:220.25px;height:9.2px;font-size:6.64px;color:#4a4a4a'>Anulowany</div>
<div class='cell' style='left:460.2px;top:214.0px;height:22.6px;width:108.8px;justify-content:center;font-size:6.7px;letter-spacing:0.2px;color:#555'>15.01.2025</div>
<div class='kn' style='left:573px;top:213.5px;height:22.6px'><div class='l1'>AP-METAL</div><div class='l2'>AP-METAL</div></div>
<div class='cell' style='left:680px;top:214.0px;height:22.6px;font-size:6.8px;color:#444'>Kapitan Bomba</div>
<div class='dt' style='left:767.3px;top:213.5px;height:22.6px;width:112.3px'><div>26.02.2025</div><div>14:04</div></div>
<div class='a' style='left:963.3px;top:222px;width:1.8px;height:1.8px;background:#2a2a2a;border-radius:50%;box-shadow:0 3px 0 #2a2a2a,0 6px 0 #2a2a2a'></div>
<div class='rl' style='left:5.5px;top:260px;width:969.5px'></div>
<div class='cb' style='left:11px;top:243.45px'></div>
<div class='cell' style='left:32.5px;top:236.9px;height:22.8px;font-size:6.3px;color:#444'>DPOK</div>
<div class='cell' style='left:82.5px;top:236.9px;height:22.8px;font-size:7px'><span class='pz'><b>PZ</b>/2025/02/000016</span></div>
<div class='a' style='left:310.8px;top:242.45px;width:10.5px;height:13.3px;background:#f4f4f4'></div>
<div class='a' style='left:312.6px;top:245.25px;width:7px;height:0.8px;background:#d3d3d3'></div>
<div class='a' style='left:312.6px;top:248.25px;width:7px;height:0.8px;background:#d3d3d3'></div>
<div class='a' style='left:310.8px;top:253.85px;width:10.5px;height:1.9px;background:#bcbcbc'></div>
<div class='a' style='left:359px;top:243.95px;width:9.5px;height:9.2px;background:#c2dbd6'></div>
<svg class='a' style='left:361px;top:245.45px' width='6' height='5' viewBox='0 0 6 5'><path d='M0.8 2.6L2.3 4L5.3 1' fill='none' stroke='#2a5852' stroke-width='1'/></svg>
<div class='a' style='left:370.9px;top:243.95px;width:43.8px;height:9.2px;background:#b6e1d9'></div>
<div class='cell' style='left:372.7px;top:243.45px;height:9.2px;font-size:6.7px;color:#27403d'>Zrealizowany</div>
<div class='cell' style='left:460.2px;top:236.9px;height:22.8px;width:108.8px;justify-content:center;font-size:6.7px;letter-spacing:0.2px;color:#555'>26.02.2025</div>
<div class='kn' style='left:573px;top:236.4px;height:22.8px'><div class='l1'>KNT00001</div><div class='l2'>JAN MRÓZ</div></div>
<div class='cell' style='left:680px;top:236.9px;height:22.8px;font-size:6.8px;color:#444'>Kapitan Bomba</div>
<div class='dt' style='left:767.3px;top:236.4px;height:22.8px;width:112.3px'><div>26.02.2025</div><div>14:03</div></div>
<div class='dt' style='left:879.9px;top:236.4px;height:22.8px;width:71.8px'><div>26.02.2025</div><div>14:04</div></div>
<div class='a' style='left:963.3px;top:245px;width:1.8px;height:1.8px;background:#2a2a2a;border-radius:50%;box-shadow:0 3px 0 #2a2a2a,0 6px 0 #2a2a2a'></div>
<div class='rl' style='left:5.5px;top:283px;width:969.5px'></div>
<div class='cb' style='left:11px;top:266.65px'></div>
<div class='cell' style='left:32.5px;top:260.0px;height:23.0px;font-size:6.3px;color:#444'>DPOK</div>
<div class='cell' style='left:82.5px;top:260.0px;height:23.0px;font-size:7px'><span class='pz'><b>PZ</b>/2025/02/000018</span></div>
<div class='a' style='left:310.8px;top:265.65px;width:10.5px;height:13.3px;background:#f4f4f4'></div>
<div class='a' style='left:312.6px;top:268.45px;width:7px;height:0.8px;background:#d3d3d3'></div>
<div class='a' style='left:312.6px;top:271.45px;width:7px;height:0.8px;background:#d3d3d3'></div>
<div class='a' style='left:310.8px;top:277.05px;width:10.5px;height:1.9px;background:#bcbcbc'></div>
<div class='a' style='left:359px;top:267.15px;width:9.5px;height:9.2px;background:#c2dbd6'></div>
<svg class='a' style='left:361px;top:268.65px' width='6' height='5' viewBox='0 0 6 5'><path d='M0.8 2.6L2.3 4L5.3 1' fill='none' stroke='#2a5852' stroke-width='1'/></svg>
<div class='a' style='left:370.9px;top:267.15px;width:43.8px;height:9.2px;background:#b6e1d9'></div>
<div class='cell' style='left:372.7px;top:266.65px;height:9.2px;font-size:6.7px;color:#27403d'>Zrealizowany</div>
<div class='cell' style='left:460.2px;top:260.0px;height:23.0px;width:108.8px;justify-content:center;font-size:6.7px;letter-spacing:0.2px;color:#555'>26.02.2025</div>
<div class='kn' style='left:573px;top:259.5px;height:23.0px'><div class='l1'>KNT000990</div><div class='l2'>CCC</div></div>
<div class='cell' style='left:680px;top:260.0px;height:23.0px;font-size:6.8px;color:#444'>Kapitan Bomba</div>
<div class='dt' style='left:767.3px;top:259.5px;height:23.0px;width:112.3px'><div>26.02.2025</div><div>14:05</div></div>
<div class='dt' style='left:879.9px;top:259.5px;height:23.0px;width:71.8px'><div>27.02.2025</div><div>14:35</div></div>
<div class='a' style='left:963.3px;top:268px;width:1.8px;height:1.8px;background:#2a2a2a;border-radius:50%;box-shadow:0 3px 0 #2a2a2a,0 6px 0 #2a2a2a'></div>
<div class='rl' style='left:5.5px;top:306px;width:969.5px'></div>
<div class='cb' style='left:11px;top:289.75px'></div>
<div class='cell' style='left:32.5px;top:283.3px;height:22.6px;font-size:6.3px;color:#444'>DPOK</div>
<div class='cell' style='left:82.5px;top:283.3px;height:22.6px;font-size:7px'><span class='pz'><b>PZ</b>/2025/06/000001</span></div>
<div class='cell' style='left:167px;top:283.3px;height:22.6px;font-size:6.8px;color:#333'>creation?</div>
<div class='a' style='left:310.8px;top:288.75px;width:10.5px;height:13.3px;background:#f4f4f4'></div>
<div class='a' style='left:312.6px;top:291.55px;width:7px;height:0.8px;background:#d3d3d3'></div>
<div class='a' style='left:312.6px;top:294.55px;width:7px;height:0.8px;background:#d3d3d3'></div>
<div class='a' style='left:310.8px;top:300.15px;width:10.5px;height:1.9px;background:#bcbcbc'></div>
<div class='a' style='left:359px;top:290.25px;width:9.5px;height:9.2px;background:#c2dbd6'></div>
<svg class='a' style='left:361px;top:291.75px' width='6' height='5' viewBox='0 0 6 5'><path d='M0.8 2.6L2.3 4L5.3 1' fill='none' stroke='#2a5852' stroke-width='1'/></svg>
<div class='a' style='left:370.9px;top:290.25px;width:43.8px;height:9.2px;background:#b6e1d9'></div>
<div class='cell' style='left:372.7px;top:289.75px;height:9.2px;font-size:6.7px;color:#27403d'>Zrealizowany</div>
<div class='cell' style='left:460.2px;top:283.3px;height:22.6px;width:108.8px;justify-content:center;font-size:6.7px;letter-spacing:0.2px;color:#555'>02.06.2025</div>
<div class='kn' style='left:573px;top:282.8px;height:22.6px'><div class='l1'>KNT000990</div><div class='l2'>CCC</div></div>
<div class='cell' style='left:680px;top:283.3px;height:22.6px;font-size:6.8px;color:#444'>marc bmb</div>
<div class='dt' style='left:767.3px;top:282.8px;height:22.6px;width:112.3px'><div>02.06.2025</div><div>16:09</div></div>
<div class='dt' style='left:879.9px;top:282.8px;height:22.6px;width:71.8px'><div>09.06.2025</div><div>12:30</div></div>
<div class='a' style='left:963.3px;top:291px;width:1.8px;height:1.8px;background:#2a2a2a;border-radius:50%;box-shadow:0 3px 0 #2a2a2a,0 6px 0 #2a2a2a'></div>
<div class='rl' style='left:5.5px;top:337px;width:969.5px'></div>
<div class='cb' style='left:11px;top:316.45px'></div>
<div class='cell' style='left:32.5px;top:306.2px;height:30.2px;font-size:6.3px;color:#444'>DPOK</div>
<div class='cell' style='left:82.5px;top:306.2px;height:30.2px;font-size:7px'><span class='pz'><b>PZ</b>/2025/06/000003</span></div>
<div class='cell' style='left:167px;top:306.2px;height:30.2px;font-size:6.8px;color:#333'>sda</div>
<div class='a' style='left:310.8px;top:315.45px;width:10.5px;height:13.3px;background:#f4f4f4'></div>
<div class='a' style='left:312.6px;top:318.25px;width:7px;height:0.8px;background:#d3d3d3'></div>
<div class='a' style='left:312.6px;top:321.25px;width:7px;height:0.8px;background:#d3d3d3'></div>
<div class='a' style='left:310.8px;top:326.85px;width:10.5px;height:1.9px;background:#bcbcbc'></div>
<div class='a' style='left:359px;top:316.95px;width:9.5px;height:9.2px;background:#c2dbd6'></div>
<svg class='a' style='left:361px;top:318.45px' width='6' height='5' viewBox='0 0 6 5'><path d='M0.8 2.6L2.3 4L5.3 1' fill='none' stroke='#2a5852' stroke-width='1'/></svg>
<div class='a' style='left:370.9px;top:316.95px;width:43.8px;height:9.2px;background:#b6e1d9'></div>
<div class='cell' style='left:372.7px;top:316.45px;height:9.2px;font-size:6.7px;color:#27403d'>Zrealizowany</div>
<div class='cell' style='left:460.2px;top:306.2px;height:30.2px;width:108.8px;justify-content:center;font-size:6.7px;letter-spacing:0.2px;color:#555'>09.06.2025</div>
<div class='kn' style='left:573px;top:305.7px;height:30.2px'><div class='l1'>KNT000140</div><div class='l2'>BAUHAUS E-Business GmbH &</div><div class='l2'>Co. KG</div></div>
<div class='cell' style='left:680px;top:306.2px;height:30.2px;font-size:6.8px;color:#444'>Kapitan Bomba</div>
<div class='dt' style='left:767.3px;top:306.5px;height:30.2px;width:112.3px'><div>09.06.2025</div><div>12:32</div></div>
<div class='dt' style='left:879.9px;top:306.5px;height:30.2px;width:71.8px'><div>09.06.2025</div><div>12:32</div></div>
<div class='a' style='left:963.3px;top:318px;width:1.8px;height:1.8px;background:#2a2a2a;border-radius:50%;box-shadow:0 3px 0 #2a2a2a,0 6px 0 #2a2a2a'></div>
<div class='rl' style='left:5.5px;top:367px;width:969.5px'></div>
<div class='cb' style='left:11px;top:346.95px'></div>
<div class='cell' style='left:32.5px;top:336.7px;height:30.2px;font-size:6.3px;color:#444'>DPOK</div>
<div class='cell' style='left:82.5px;top:336.7px;height:30.2px;font-size:7px'><span class='pz'><b>PZ</b>/2025/06/000005</span></div>
<div class='a' style='left:310.8px;top:345.95px;width:10.5px;height:13.3px;background:#f4f4f4'></div>
<div class='a' style='left:312.6px;top:348.75px;width:7px;height:0.8px;background:#d3d3d3'></div>
<div class='a' style='left:312.6px;top:351.75px;width:7px;height:0.8px;background:#d3d3d3'></div>
<div class='a' style='left:310.8px;top:357.35px;width:10.5px;height:1.9px;background:#bcbcbc'></div>
<div class='a' style='left:359px;top:347.45px;width:9.5px;height:9.2px;background:#c2dbd6'></div>
<svg class='a' style='left:361px;top:348.95px' width='6' height='5' viewBox='0 0 6 5'><path d='M0.8 2.6L2.3 4L5.3 1' fill='none' stroke='#2a5852' stroke-width='1'/></svg>
<div class='a' style='left:370.9px;top:347.45px;width:43.8px;height:9.2px;background:#b6e1d9'></div>
<div class='cell' style='left:372.7px;top:346.95px;height:9.2px;font-size:6.7px;color:#27403d'>Zrealizowany</div>
<div class='cell' style='left:460.2px;top:336.7px;height:30.2px;width:108.8px;justify-content:center;font-size:6.7px;letter-spacing:0.2px;color:#555'>09.06.2025</div>
<div class='kn' style='left:573px;top:336.2px;height:30.2px'><div class='l1'>KNT000140</div><div class='l2'>BAUHAUS E-Business GmbH &</div><div class='l2'>Co. KG</div></div>
<div class='cell' style='left:680px;top:336.7px;height:30.2px;font-size:6.8px;color:#444'>Kapitan Bomba</div>
<div class='dt' style='left:767.3px;top:337.0px;height:30.2px;width:112.3px'><div>09.06.2025</div><div>12:34</div></div>
<div class='dt' style='left:879.9px;top:337.0px;height:30.2px;width:71.8px'><div>09.06.2025</div><div>12:34</div></div>
<div class='a' style='left:963.3px;top:348px;width:1.8px;height:1.8px;background:#2a2a2a;border-radius:50%;box-shadow:0 3px 0 #2a2a2a,0 6px 0 #2a2a2a'></div>
<div class='rl' style='left:5.5px;top:390px;width:969.5px'></div>
<div class='cb' style='left:11px;top:373.75px'></div>
<div class='cell' style='left:32.5px;top:367.2px;height:22.8px;font-size:6.3px;color:#444'>DPOK</div>
<div class='cell' style='left:82.5px;top:367.2px;height:22.8px;font-size:7px'><span class='pz'><b>PZ</b>/2025/06/000004</span></div>
<div class='a' style='left:310.8px;top:372.75px;width:10.5px;height:13.3px;background:#f4f4f4'></div>
<div class='a' style='left:312.6px;top:375.55px;width:7px;height:0.8px;background:#d3d3d3'></div>
<div class='a' style='left:312.6px;top:378.55px;width:7px;height:0.8px;background:#d3d3d3'></div>
<div class='a' style='left:310.8px;top:384.15px;width:10.5px;height:1.9px;background:#bcbcbc'></div>
<div class='a' style='left:359px;top:374.25px;width:9.5px;height:9.2px;background:#c2dbd6'></div>
<svg class='a' style='left:361px;top:375.75px' width='6' height='5' viewBox='0 0 6 5'><path d='M0.8 2.6L2.3 4L5.3 1' fill='none' stroke='#2a5852' stroke-width='1'/></svg>
<div class='a' style='left:370.9px;top:374.25px;width:43.8px;height:9.2px;background:#b6e1d9'></div>
<div class='cell' style='left:372.7px;top:373.75px;height:9.2px;font-size:6.7px;color:#27403d'>Zrealizowany</div>
<div class='cell' style='left:460.2px;top:367.2px;height:22.8px;width:108.8px;justify-content:center;font-size:6.7px;letter-spacing:0.2px;color:#555'>09.06.2025</div>
<div class='kn' style='left:573px;top:366.7px;height:22.8px'><div class='l1'>AP-METAL</div><div class='l2'>AP-METAL</div></div>
<div class='cell' style='left:680px;top:367.2px;height:22.8px;font-size:6.8px;color:#444'>Kapitan Bomba</div>
<div class='dt' style='left:767.3px;top:366.7px;height:22.8px;width:112.3px'><div>09.06.2025</div><div>12:32</div></div>
<div class='dt' style='left:879.9px;top:366.7px;height:22.8px;width:71.8px'><div>09.06.2025</div><div>12:32</div></div>
<div class='a' style='left:963.3px;top:375px;width:1.8px;height:1.8px;background:#2a2a2a;border-radius:50%;box-shadow:0 3px 0 #2a2a2a,0 6px 0 #2a2a2a'></div>
<div class='rl' style='left:5.5px;top:421px;width:969.5px'></div>
<div class='cb' style='left:11px;top:400.5px'></div>
<div class='cell' style='left:32.5px;top:390.3px;height:30.1px;font-size:6.3px;color:#444'>DPOK</div>
<div class='cell' style='left:82.5px;top:390.3px;height:30.1px;font-size:7px'><span class='pz'><b>PZ</b>/2025/06/000006</span></div>
<div class='a' style='left:310.8px;top:399.5px;width:10.5px;height:13.3px;background:#f4f4f4'></div>
<div class='a' style='left:312.6px;top:402.3px;width:7px;height:0.8px;background:#d3d3d3'></div>
<div class='a' style='left:312.6px;top:405.3px;width:7px;height:0.8px;background:#d3d3d3'></div>
<div class='a' style='left:310.8px;top:410.9px;width:10.5px;height:1.9px;background:#bcbcbc'></div>
<div class='a' style='left:359px;top:401.0px;width:9.5px;height:9.2px;background:#c2dbd6'></div>
<svg class='a' style='left:361px;top:402.5px' width='6' height='5' viewBox='0 0 6 5'><path d='M0.8 2.6L2.3 4L5.3 1' fill='none' stroke='#2a5852' stroke-width='1'/></svg>
<div class='a' style='left:370.9px;top:401.0px;width:43.8px;height:9.2px;background:#b6e1d9'></div>
<div class='cell' style='left:372.7px;top:400.5px;height:9.2px;font-size:6.7px;color:#27403d'>Zrealizowany</div>
<div class='cell' style='left:460.2px;top:390.3px;height:30.1px;width:108.8px;justify-content:center;font-size:6.7px;letter-spacing:0.2px;color:#555'>09.06.2025</div>
<div class='kn' style='left:573px;top:389.8px;height:30.1px'><div class='l1'>KNT000140</div><div class='l2'>BAUHAUS E-Business GmbH &</div><div class='l2'>Co. KG</div></div>
<div class='cell' style='left:680px;top:390.3px;height:30.1px;font-size:6.8px;color:#444'>Kapitan Bomba</div>
<div class='dt' style='left:767.3px;top:390.6px;height:30.1px;width:112.3px'><div>09.06.2025</div><div>12:35</div></div>
<div class='dt' style='left:879.9px;top:390.6px;height:30.1px;width:71.8px'><div>09.06.2025</div><div>12:35</div></div>
<div class='a' style='left:963.3px;top:402px;width:1.8px;height:1.8px;background:#2a2a2a;border-radius:50%;box-shadow:0 3px 0 #2a2a2a,0 6px 0 #2a2a2a'></div>
</div>
<div class='a' style='left:1009.5px;top:111px;width:4.5px;height:425px;background:#f6f7f8;border-radius:2px'></div>
<div class='a' style='left:1009.8px;top:111px;width:4.4px;height:238px;background:#1f73d1;border-radius:2px'></div>
<div class='a' style='left:38px;top:536px;width:971px;height:5px;background:#f3f4f5'></div>
<div class='a' style='left:38px;top:536.3px;width:776px;height:4.8px;background:#1f73d1;border-radius:0 1px 1px 0'></div>
<svg class='a' style='left:44.5px;top:545.5px' width='9' height='9' viewBox='0 0 9 9'><path d='M1 2H8M1 4.5H8M1 7H8M3 1V3M6 3.5V5.5M4 6V8' stroke='#4a7fbf' stroke-width='0.9'/></svg>
<div class='a' style='left:61.6px;top:545px;width:0.8px;height:13px;background:#e9ebee'></div>
<div class='t' style='left:65.4px;top:546.8px;font-size:6.26px;color:#555'>Wczytano: <b style='color:#3a72b8'>30</b> z <b style='color:#3a72b8'>54</b> pozycji</div>
<div class='a' style='left:142px;top:545px;width:0.8px;height:13px;background:#e9ebee'></div>
<div class='t' style='left:146.4px;top:546.8px;font-size:6.26px;color:#555'>Zaznaczono: <b style='color:#3a72b8'>0</b> z <b style='color:#3a72b8'>54</b> pozycji</div>
<div class='t' style='left:869.2px;top:546.8px;font-size:6.1px;color:#888'>Przewijaj tabelę w bok:</div>
<div class='a' style='left:933.5px;top:544.9px;width:20px;height:9.2px;border:0.8px solid #e6e8eb;border-radius:1px;background:#fcfcfc'></div>
<div class='t' style='left:935.5px;top:547.5px;font-size:5.3px;font-weight:700;color:#777;letter-spacing:0.3px'>SHIFT</div>
<div class='t' style='left:956.3px;top:547px;font-size:6px;color:#888'>+</div>
<div class='a' style='left:961.6px;top:544.9px;width:46.2px;height:9.2px;border:0.8px solid #e6e8eb;border-radius:1px;background:#fcfcfc'></div>
<div class='t' style='left:963.3px;top:547.3px;font-size:5.3px;font-weight:700;color:#7a7a7a;letter-spacing:0.22px'>SCROLL MYSZY</div>
</body></html>
